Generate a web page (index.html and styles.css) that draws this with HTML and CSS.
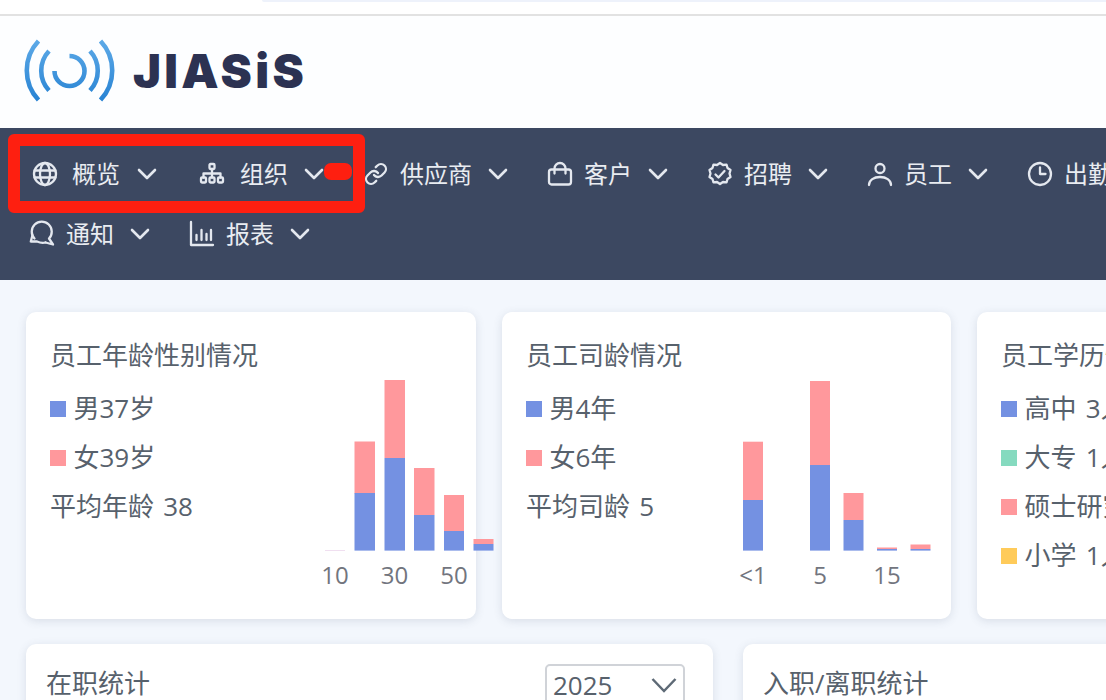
FILE: index.html
```html
<!DOCTYPE html>
<html lang="zh-CN">
<head>
<meta charset="utf-8">
<title>JIASiS</title>
<link rel="stylesheet" href="styles.css">
</head>
<body>
<div class="page">
  <div class="topstrip"><div class="topstrip-pill"></div></div>
  <header class="brand">
    <svg class="brand-mark" width="92" height="66" viewBox="24 38 92 66" fill="none">
      <defs>
        <linearGradient id="lg" x1="0" y1="38" x2="0" y2="104" gradientUnits="userSpaceOnUse">
          <stop offset="0" stop-color="#5fabe8"/><stop offset="1" stop-color="#2581d2"/>
        </linearGradient>
      </defs>
      <g stroke="url(#lg)" stroke-width="4.6">
        <path d="M38.5 41A43 43 0 0 0 38.5 100"/>
        <path d="M100.5 41A43 43 0 0 1 100.5 100"/>
        <path d="M49 51A29 29 0 0 0 49 90.5"/>
        <path d="M90 51A29 29 0 0 1 90 90.5"/>
        <path d="M54.500 71A15 15 0 1 0 69.500 56"/>
      </g>
    </svg>
    <span class="brand-name">JIASiS</span>
  </header>
  <nav class="nav">
    <div class="nav-row">
      <a class="nav-item nav-item-first"><svg class="ico" viewBox="0 0 24 24"><circle cx="12" cy="12" r="11"/><ellipse cx="12" cy="12" rx="5" ry="11"/><path d="M1.500 8.500h21M1.500 15.500h21"/></svg><span class="nav-label">概览</span><svg class="chev" viewBox="0 0 20 20"><path d="M2 6l8 8 8-8"/></svg></a>
      <a class="nav-item nav-item-wide"><svg class="ico" viewBox="0 0 24 24"><rect x="9.500" y="2" width="5" height="5" rx="1"/><rect x="1" y="15.500" width="5" height="5" rx="1"/><rect x="9.500" y="15.500" width="5" height="5" rx="1"/><rect x="18" y="15.500" width="5" height="5" rx="1"/><path d="M12 7v8.500M3.500 15.500V11.500h17v4"/></svg><span class="nav-label">组织</span><svg class="chev" viewBox="0 0 20 20"><path d="M2 6l8 8 8-8"/></svg></a>
      <a class="nav-item nav-item-link"><svg class="ico" viewBox="0 0 24 24"><path d="M10 13a5 5 0 0 0 7.540.540l3-3a5 5 0 0 0-7.070-7.070l-1.720 1.710"/><path d="M14 11a5 5 0 0 0-7.540-.540l-3 3a5 5 0 0 0 7.070 7.070l1.710-1.710"/></svg><span class="nav-label">供应商</span><svg class="chev" viewBox="0 0 20 20"><path d="M2 6l8 8 8-8"/></svg></a>
      <a class="nav-item"><svg class="ico" viewBox="0 0 24 24"><rect x="1" y="7.500" width="22" height="15" rx="2.500"/><path d="M6.500 11.500V6.500a5.500 5.500 0 0 1 11 0v5"/></svg><span class="nav-label">客户</span><svg class="chev" viewBox="0 0 20 20"><path d="M2 6l8 8 8-8"/></svg></a>
      <a class="nav-item"><svg class="ico" viewBox="0 0 24 24"><path d="M12 1l3 2 3.500-.3 1 3.300 3 2-1 3.500 1 3.500-3 2-1 3.300-3.500-.3-3 2-3-2-3.500.3-1-3.300-3-2 1-3.500-1-3.500 3-2 1-3.300L9 3z"/><path d="M7.500 12.500l3 3 6-6.500"/></svg><span class="nav-label">招聘</span><svg class="chev" viewBox="0 0 20 20"><path d="M2 6l8 8 8-8"/></svg></a>
      <a class="nav-item"><svg class="ico" viewBox="0 0 24 24"><circle cx="12" cy="6.500" r="4.500"/><path d="M1 23c0-5 5-8 11-8s11 3 11 8"/></svg><span class="nav-label">员工</span><svg class="chev" viewBox="0 0 20 20"><path d="M2 6l8 8 8-8"/></svg></a>
      <a class="nav-item"><svg class="ico" viewBox="0 0 24 24"><circle cx="12" cy="12" r="11"/><path d="M12 5.500V12h5.500"/></svg><span class="nav-label">出勤</span></a>
    </div>
    <div class="nav-row">
      <a class="nav-item"><svg class="ico" viewBox="0 0 24 24"><path d="M4.500 16.500A10 10 0 1 1 19 16.500L23 22.500 15.500 20.500"/><path d="M2.500 13L.8 19.500H7Q11.500 21.500 15.500 20.500"/></svg><span class="nav-label">通知</span><svg class="chev" viewBox="0 0 20 20"><path d="M2 6l8 8 8-8"/></svg></a>
      <a class="nav-item"><svg class="ico" viewBox="0 0 24 24"><path d="M1 0v23h22"/><path d="M6.500 18v-5M11.500 18V8M16.500 18v-6M21 18V8"/></svg><span class="nav-label">报表</span><svg class="chev" viewBox="0 0 20 20"><path d="M2 6l8 8 8-8"/></svg></a>
    </div>
    <div class="mark-box"></div>
    <div class="mark-pill"></div>
  </nav>
  <main class="main">
    <section class="row row-stats">
      <article class="card">
        <div class="card-left">
          <h2 class="card-title">员工年龄性别情况</h2>
          <ul class="legend">
            <li class="legend-item"><i class="dot dot-blue"></i>男37岁</li>
            <li class="legend-item"><i class="dot dot-pink"></i>女39岁</li>
            <li class="legend-item">平均年龄 38</li>
          </ul>
        </div>
        <svg class="chart chart-age" width="200" height="230" viewBox="300 370 200 230">
          <rect class="b-faint" x="325" y="550" width="20" height="1"/>
          <rect class="b-pink" x="354.500" y="441.500" width="20.500" height="52"/><rect class="b-blue" x="354.500" y="493" width="20.500" height="57.600"/>
          <rect class="b-pink" x="384.500" y="380" width="20.500" height="78"/><rect class="b-blue" x="384.500" y="458" width="20.500" height="92.600"/>
          <rect class="b-pink" x="414" y="468" width="20.500" height="47"/><rect class="b-blue" x="414" y="515" width="20.500" height="35.600"/>
          <rect class="b-pink" x="444" y="495" width="20" height="36"/><rect class="b-blue" x="444" y="531" width="20" height="19.600"/>
          <rect class="b-pink" x="473.500" y="539" width="20" height="5"/><rect class="b-blue" x="473.500" y="544" width="20" height="6.600"/>
          <text class="tick" x="335" y="584">10</text><text class="tick" x="394.500" y="584">30</text><text class="tick" x="454" y="584">50</text>
        </svg>
      </article>
      <article class="card">
        <div class="card-left card-left-tenure">
          <h2 class="card-title">员工司龄情况</h2>
          <ul class="legend">
            <li class="legend-item"><i class="dot dot-blue"></i>男4年</li>
            <li class="legend-item"><i class="dot dot-pink"></i>女6年</li>
            <li class="legend-item">平均司龄 5</li>
          </ul>
        </div>
        <svg class="chart" width="240" height="230" viewBox="720 370 240 230">
          <rect class="b-pink" x="743" y="441.700" width="20" height="58.300"/><rect class="b-blue" x="743" y="500" width="20" height="50.600"/>
          <rect class="b-pink" x="810" y="381" width="20" height="84"/><rect class="b-blue" x="810" y="465" width="20" height="85.600"/>
          <rect class="b-pink" x="843.500" y="493" width="20" height="27"/><rect class="b-blue" x="843.500" y="520" width="20" height="30.600"/>
          <rect class="b-pink" x="877" y="547.500" width="20" height="1.500"/><rect class="b-blue" x="877" y="549" width="20" height="1.600"/>
          <rect class="b-pink" x="910.500" y="544.500" width="20" height="4.500"/><rect class="b-blue" x="910.500" y="549" width="20" height="1.600"/>
          <text class="tick" x="753" y="584">&lt;1</text><text class="tick" x="820" y="584">5</text><text class="tick" x="887" y="584">15</text>
        </svg>
      </article>
      <article class="card">
        <div class="card-left">
          <h2 class="card-title">员工学历情况</h2>
          <ul class="legend">
            <li class="legend-item"><i class="dot dot-blue"></i>高中 3人</li>
            <li class="legend-item"><i class="dot dot-green"></i>大专 1人</li>
            <li class="legend-item"><i class="dot dot-pink"></i>硕士研究生 1人</li>
            <li class="legend-item"><i class="dot dot-yellow"></i>小学 1人</li>
          </ul>
        </div>
      </article>
    </section>
    <section class="row row-lower">
      <article class="panel panel-active">
        <h2 class="panel-title">在职统计</h2>
        <div class="select"><span>2025</span><svg class="select-chev" viewBox="0 0 26 16"><path d="M1.500 2l11.500 12L24.500 2"/></svg></div>
      </article>
      <article class="panel panel-flow">
        <h2 class="panel-title">入职/离职统计</h2>
      </article>
    </section>
  </main>
</div>
</body>
</html>
```
FILE: styles.css
```css
* { box-sizing: border-box; }
html, body { margin: 0; padding: 0; }
body {
  width: 1106px;
  height: 700px;
  overflow: hidden;
  background: #f3f7fd;
  font-family: "Open Sans", "Noto Sans CJK SC", sans-serif;
  color: #57616c;
}
.page { width: 1106px; height: 700px; overflow: hidden; display: flex; flex-direction: column; }
.topstrip { height: 16px; flex: none; background: #fff; border-bottom: 2px solid #e2e2e2; }
.topstrip-pill { margin-left: 262px; height: 2px; background: #eef2fb; border-radius: 0 0 0 6px; }
.brand { height: 112px; flex: none; background: #fdfeff; display: flex; align-items: flex-start; padding: 22px 0 0 24px; }
.brand-mark { flex: none; }
.brand-name {
  margin: 3px 0 0 17px;
  font-family: "Inter", sans-serif;
  font-weight: 900;
  font-size: 47px;
  line-height: 60px;
  letter-spacing: 3.300px;
  color: #2c3252;
}
.nav { position: relative; flex: none; height: 152px; padding: 16px 0 16px 14px; background: #3c4861; color: #e9ecf1; }
.nav-row { display: flex; height: 60px; align-items: center; white-space: nowrap; }
.nav-item { display: flex; flex: none; align-items: center; padding: 0 24px 0 16px; font-size: 24px; }
.nav-item-first { margin-left: 3px; }
.nav-item-wide { margin-left: 3px; }
.nav-item-first .ico { margin-right: 15px; }
.nav-item-wide .ico { margin-right: 16px; }
.nav-item-first .chev { margin-left: 17px; }
.ico { width: 24px; height: 24px; margin-right: 12px; fill: none; stroke: #e4e8ef; stroke-width: 2.300; stroke-linecap: round; stroke-linejoin: round; flex: none; overflow: visible; }
.nav-label { line-height: 32px; }
.chev { width: 20px; height: 20px; margin-left: 16px; fill: none; stroke: #e4e8ef; stroke-width: 2.600; stroke-linecap: round; stroke-linejoin: round; flex: none; }
.mark-box { position: absolute; left: 8px; top: 6px; width: 357px; height: 79px; border: 12px solid #fe1f10; border-radius: 6px; }
.mark-pill { position: absolute; left: 324px; top: 35px; width: 28px; height: 17px; border-radius: 7px; background: #fe1f10; }
.main { flex: 1; min-height: 0; overflow: hidden; padding: 32px 0 0 26px; }
.row { display: flex; }
.row-stats { gap: 26px; }
.row-lower { gap: 30px; margin-top: 25px; }
.card { flex: none; width: 450px; height: 307px; display: flex; background: #fff; border-radius: 10px; padding: 24px 0 0 24px; box-shadow: 0 2px 10px rgba(60, 72, 97, .14); }
.card:nth-child(2) { width: 449px; }
.card-left { flex: none; width: 250px; }
.card-left-tenure { width: 194px; }
.card-title, .panel-title { margin: 0; font-size: 26px; font-weight: 400; line-height: 38px; white-space: nowrap; }
.legend { list-style: none; margin: 8.500px 0 0; padding: 0; }
.legend-item { display: flex; align-items: center; height: 49px; font-size: 26px; white-space: pre; word-spacing: 2.500px; }
.dot { display: block; width: 16px; height: 16px; margin: 4px 7.500px 0 0; flex: none; }
.dot-blue { background: #7491e2; }
.dot-pink { background: #ff989c; }
.dot-green { background: #85dabf; }
.dot-yellow { background: #ffcb5a; }
.chart { flex: none; margin-top: 34px; overflow: visible; }
.b-pink { fill: #ff989c; }
.b-blue { fill: #7491e2; }
.b-faint { fill: #f0dff0; }
.tick { font-size: 24px; fill: #72757e; text-anchor: middle; }
.panel { flex: none; height: 200px; display: flex; align-items: flex-start; justify-content: space-between; background: #fff; border-radius: 10px; padding: 20px 28px 0 20px; box-shadow: 0 2px 10px rgba(60, 72, 97, .14); }
.panel-active { width: 687px; }
.panel-flow { width: 687px; }
.select { width: 140px; height: 50px; border: 2px solid #d0d3d8; border-radius: 5px; padding: 0 6px; display: flex; align-items: flex-start; justify-content: space-between; font-size: 26px; line-height: 38px; }
.select-chev { width: 26px; height: 16px; margin: 11px 0 0; fill: none; stroke: #5e6a76; stroke-width: 2.500; }
```
